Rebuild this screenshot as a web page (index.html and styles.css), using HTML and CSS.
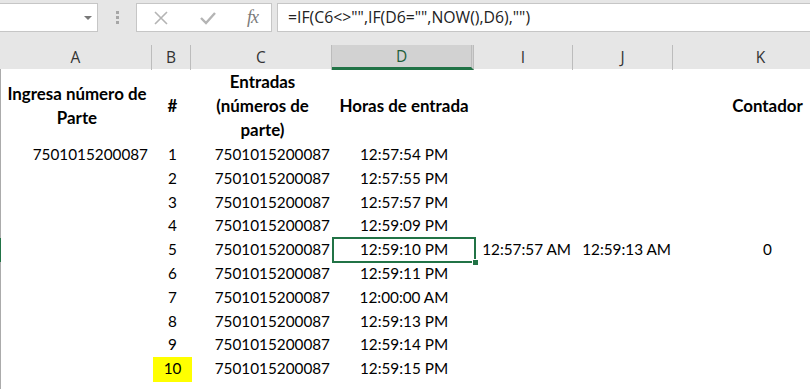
FILE: index.html
```html
<!DOCTYPE html>
<html lang="en">
<head>
  <meta charset="UTF-8">
  <title>Registro de entradas</title>
  <link rel="stylesheet" href="styles.css">
</head>
<body>
  <div class="toolbar">
    <div class="name-box">
      <span class="drop-arrow"></span>
    </div>
    <div class="grip"><i></i><i></i><i></i></div>
    <div class="fx-buttons">
      <svg class="icon" width="16" height="16" viewBox="0 0 16 16">
        <path d="M2 2 L14 14 M14 2 L2 14" stroke="#b4b4b4" stroke-width="1.6" fill="none"/>
      </svg>
      <svg class="icon" width="18" height="16" viewBox="0 0 18 16">
        <path d="M2 8 L7 13 L16 3" stroke="#b4b4b4" stroke-width="2.4" fill="none"/>
      </svg>
      <span class="fx">fx</span>
    </div>
    <div class="formula">=IF(C6&lt;&gt;"",IF(D6="",NOW(),D6),"")</div>
  </div>

  <div class="col-heads">
    <div class="col-head">A</div>
    <div class="col-head">B</div>
    <div class="col-head">C</div>
    <div class="col-head active">D</div>
    <div class="col-head">I</div>
    <div class="col-head">J</div>
    <div class="col-head col-k">K</div>
  </div>

  <div class="sheet">
    <div class="row title-row">
      <div class="cell bold center">Ingresa número de<br>Parte</div>
      <div class="cell bold center">#</div>
      <div class="cell bold center">Entradas<br>(números de<br>parte)</div>
      <div class="cell bold center">Horas de entrada</div>
      <div class="cell"></div>
      <div class="cell"></div>
      <div class="cell bold center col-k">Contador</div>
    </div>

    <div class="row">
      <div class="cell right pad-a">7501015200087</div>
      <div class="cell center">1</div>
      <div class="cell right">7501015200087</div>
      <div class="cell center">12:57:54 PM</div>
      <div class="cell"></div><div class="cell"></div><div class="cell"></div>
    </div>
    <div class="row">
      <div class="cell"></div>
      <div class="cell center">2</div>
      <div class="cell right">7501015200087</div>
      <div class="cell center">12:57:55 PM</div>
      <div class="cell"></div><div class="cell"></div><div class="cell"></div>
    </div>
    <div class="row">
      <div class="cell"></div>
      <div class="cell center">3</div>
      <div class="cell right">7501015200087</div>
      <div class="cell center">12:57:57 PM</div>
      <div class="cell"></div><div class="cell"></div><div class="cell"></div>
    </div>
    <div class="row">
      <div class="cell"></div>
      <div class="cell center">4</div>
      <div class="cell right">7501015200087</div>
      <div class="cell center">12:59:09 PM</div>
      <div class="cell"></div><div class="cell"></div><div class="cell"></div>
    </div>
    <div class="row current">
      <div class="cell"></div>
      <div class="cell center">5</div>
      <div class="cell right">7501015200087</div>
      <div class="cell center selected">12:59:10 PM<span class="handle"></span></div>
      <div class="cell right">12:57:57 AM</div>
      <div class="cell right">12:59:13 AM</div>
      <div class="cell center col-k">0</div>
    </div>
    <div class="row">
      <div class="cell"></div>
      <div class="cell center">6</div>
      <div class="cell right">7501015200087</div>
      <div class="cell center">12:59:11 PM</div>
      <div class="cell"></div><div class="cell"></div><div class="cell"></div>
    </div>
    <div class="row">
      <div class="cell"></div>
      <div class="cell center">7</div>
      <div class="cell right">7501015200087</div>
      <div class="cell center">12:00:00 AM</div>
      <div class="cell"></div><div class="cell"></div><div class="cell"></div>
    </div>
    <div class="row">
      <div class="cell"></div>
      <div class="cell center">8</div>
      <div class="cell right">7501015200087</div>
      <div class="cell center">12:59:13 PM</div>
      <div class="cell"></div><div class="cell"></div><div class="cell"></div>
    </div>
    <div class="row">
      <div class="cell"></div>
      <div class="cell center">9</div>
      <div class="cell right">7501015200087</div>
      <div class="cell center">12:59:14 PM</div>
      <div class="cell"></div><div class="cell"></div><div class="cell"></div>
    </div>
    <div class="row last">
      <div class="cell"></div>
      <div class="cell center yellow">10</div>
      <div class="cell right">7501015200087</div>
      <div class="cell center">12:59:15 PM</div>
      <div class="cell"></div><div class="cell"></div><div class="cell"></div>
    </div>
  </div>
</body>
</html>
```

FILE: styles.css
```css
html, body {
  margin: 0;
  padding: 0;
  width: 810px;
  height: 389px;
  overflow: hidden;
  background-color: #fff;
}
body {
  font-family: Lato, "Open Sans", sans-serif;
  color: #000;
}

/* formula bar */
.toolbar {
  display: flex;
  align-items: flex-start;
  height: 45px;
  padding-top: 3px;
  box-sizing: border-box;
  background-color: #e6e6e6;
}
.name-box {
  position: relative;
  width: 98px;
  height: 29px;
  box-sizing: border-box;
  background-color: #fff;
  border: 1px solid #c6c6c6;
  border-left: none;
}
.drop-arrow {
  position: absolute;
  left: 84px;
  top: 12px;
  border-left: 4px solid transparent;
  border-right: 4px solid transparent;
  border-top: 4px solid #787878;
}
.grip {
  width: 38px;
  display: flex;
  flex-direction: column;
  align-items: center;
  gap: 2px;
  padding-top: 8px;
}
.grip i {
  display: block;
  width: 3px;
  height: 3px;
  background-color: #a6a6a6;
}
.fx-buttons {
  width: 136px;
  height: 29px;
  box-sizing: border-box;
  display: flex;
  align-items: center;
  background-color: #fff;
  border: 1px solid #c6c6c6;
  padding-left: 16px;
  gap: 30px;
}
.fx {
  font-family: "Liberation Serif", serif;
  font-style: italic;
  font-size: 18px;
  color: #7a7a7a;
  letter-spacing: -1px;
}
.formula {
  flex: 1;
  min-width: 0;
  height: 29px;
  margin-left: 5px;
  box-sizing: border-box;
  background-color: #fff;
  border: 1px solid #c6c6c6;
  border-right: none;
  padding-left: 10px;
  font-family: "Open Sans", sans-serif;
  font-size: 15.8px;
  line-height: 27px;
  color: #222;
  white-space: nowrap;
}

/* column headings */
.col-heads,
.row {
  display: grid;
  grid-template-columns: 152px 39px 141px 142px 99px 100px 137px;
}
.col-heads {
  height: 24px;
  background-color: #e6e6e6;
}
.col-head {
  font-family: "Open Sans", sans-serif;
  font-size: 15.5px;
  line-height: 24px;
  text-align: center;
  color: #333;
  border-right: 1px solid #bcbcbc;
}
.col-head.active {
  background-color: #d2d2d2;
  border-bottom: 3px solid #217346;
  border-right: 3px double #bcbcbc;
  line-height: 22px;
  color: #1e5f3a;
}
/* column K runs past the window; keep its centre where Excel puts it */
.col-head.col-k {
  border-right: none;
  padding-left: 38px;
}

/* sheet */
.sheet {
  border-left: 1px solid #ababab;
  height: 320px;
}
.row {
  height: 23.8px;
  font-size: 15.3px;
  line-height: 23.8px;
}
.title-row {
  height: 74px;
  line-height: 24px;
}
.title-row .cell {
  display: flex;
  align-items: center;
  justify-content: center;
  font-size: 16.9px;
}
.row.current {
  box-shadow: -2px 0 0 #217346;
}
.cell {
  white-space: nowrap;
  padding: 0 3px;
  min-width: 0;
}
.row .col-k {
  padding-left: 50px;
  padding-right: 0;
}
.bold { font-weight: bold; }
.center { text-align: center; }
.right { text-align: right; }
.pad-a { padding-right: 5px; }
.yellow { background-color: #ffff00; }
.row.last { height: 25px; }

.selected {
  position: relative;
  outline: 2px solid #217346;
  outline-offset: -1px;
}
.handle {
  position: absolute;
  right: -4px;
  bottom: -4px;
  width: 5px;
  height: 5px;
  background-color: #217346;
  border: 1px solid #fff;
}
```
